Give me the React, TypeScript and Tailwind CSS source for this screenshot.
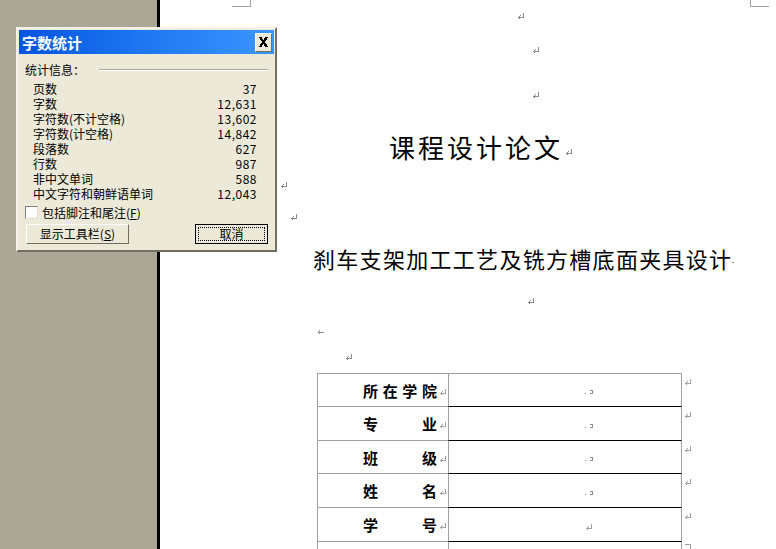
import React from "react";

const CJK = { fontFamily: '"Noto Sans CJK SC", "Noto Sans", sans-serif' };

function Ret({ c = "#8a8a8a" }: { c?: string }) {
  return (
    <svg width="8" height="8" viewBox="0 0 8 8" shapeRendering="crispEdges" className="block">
      <path d="M6.5 0.5 V5.5 H1.5" stroke={c} strokeWidth="1" fill="none" />
      <path d="M3.5 3.5 L1.5 5.5 L3.5 7.5" stroke={c} strokeWidth="1" fill="none" />
    </svg>
  );
}

function LeftArrow() {
  return (
    <svg width="8" height="6" viewBox="0 0 8 6" shapeRendering="crispEdges" className="block">
      <path d="M1 3 H7" stroke="#8a8a8a" strokeWidth="1" />
      <path d="M3 1 L1 3 L3 5" stroke="#8a8a8a" strokeWidth="1" fill="none" />
    </svg>
  );
}

function CellMark() {
  return (
    <svg width="9" height="6" viewBox="0 0 9 6" shapeRendering="crispEdges" className="block">
      <rect x="0" y="4" width="1" height="1" fill="#8a8a8a" />
      <path d="M4.5 1.5 H7.5 V4.5 H4.5" stroke="#8a8a8a" strokeWidth="1" fill="none" />
    </svg>
  );
}

const stats: [string, string][] = [
  ["页数", "37"],
  ["字数", "12,631"],
  ["字符数(不计空格)", "13,602"],
  ["字符数(计空格)", "14,842"],
  ["段落数", "627"],
  ["行数", "987"],
  ["非中文单词", "588"],
  ["中文字符和朝鲜语单词", "12,043"],
];

const rows: { chars: string[]; h: string; top: string; last?: boolean }[] = [
  { chars: ["所", "在", "学", "院"], h: "h-[33px]", top: "border-t-[#a0a0a0]" },
  { chars: ["专", "业"], h: "h-[34px]", top: "border-t-black" },
  { chars: ["班", "级"], h: "h-[33px]", top: "border-t-black" },
  { chars: ["姓", "名"], h: "h-[34px]", top: "border-t-black" },
  { chars: ["学", "号"], h: "h-[34px]", top: "border-t-black", last: true },
];

export default function App() {
  return (
    <div className="relative flex w-[776px] h-[549px] overflow-hidden bg-white" style={CJK}>
      {/* grey workspace */}
      <div className="w-[157px] h-full shrink-0 bg-[#aba797]" />
      <div className="w-[3px] h-full shrink-0 bg-black" />

      {/* document page */}
      <div className="flex-1 h-full flex flex-col bg-white overflow-hidden">
        {/* crop marks */}
        <div className="flex h-[7px] shrink-0">
          <div className="ml-[72px] w-[19px] h-[7px] border-r border-b border-[#a0a0a0]" />
          <div className="ml-[499px] w-[19px] h-[7px] border-l border-b border-[#a0a0a0]" />
        </div>
        <div className="shrink-0 mt-[4px] h-[10px] flex items-center pl-[357px]"><Ret /></div>
        <div className="shrink-0 mt-[24px] h-[10px] flex items-center pl-[372px]"><Ret /></div>
        <div className="shrink-0 mt-[35px] h-[10px] flex items-center pl-[372px]"><Ret /></div>

        {/* title */}
        <div className="shrink-0 mt-[32px] h-[30px] flex items-center pl-[229px]">
          <span className="text-[26px] leading-[30px] tracking-[3px] font-normal text-black">课程设计论文</span>
          <span className="mt-[10px] ml-[2px]"><Ret /></span>
        </div>

        <div className="shrink-0 mt-[18px] h-[10px] flex items-center pl-[120px]"><Ret /></div>
        <div className="shrink-0 mt-[22px] h-[10px] flex items-center pl-[130px]"><Ret /></div>

        {/* subtitle */}
        <div className="shrink-0 mt-[23px] h-[26px] flex items-center pl-[153px]">
          <span className="text-[22px] leading-[26px] tracking-[1.3px] text-black">刹车支架加工工艺及铣方槽底面夹具设计</span>
          <span className="mt-[8px] w-[2px] h-[1px] bg-[#8a8a8a]" />
        </div>

        <div className="shrink-0 mt-[25px] h-[10px] flex items-center pl-[367px]"><Ret /></div>
        <div className="shrink-0 mt-[21px] h-[10px] flex items-center pl-[157px]"><LeftArrow /></div>
        <div className="shrink-0 mt-[15px] h-[10px] flex items-center pl-[185px]"><Ret /></div>

        {/* table */}
        <div className="shrink-0 mt-[11px] pl-[157px] flex flex-col">
          {rows.map((r, i) => (
            <div key={i} className={`flex shrink-0 ${r.h}`}>
              <div className="w-[131px] h-full border-l border-t border-[#a0a0a0] flex items-center">
                <div className="ml-[45px] w-[74px] flex justify-between text-[15px] font-bold text-black leading-none">
                  {r.chars.map((c, k) => (
                    <span key={k}>{c}</span>
                  ))}
                </div>
                <span className="ml-[2px] mt-[3px]"><Ret c="#a0a0a0" /></span>
              </div>
              <div className={`w-[234px] h-full border-l border-r border-t border-l-[#a0a0a0] border-r-[#a0a0a0] ${r.top} flex items-center`}>
                <span className="ml-[136px] mt-[4px]">{r.last ? <Ret c="#a0a0a0" /> : <CellMark />}</span>
              </div>
              <div className="ml-[2px] mt-[5px]"><Ret c="#a0a0a0" /></div>
            </div>
          ))}
          <div className="flex shrink-0 h-[20px]">
            <div className="w-[131px] h-full border-l border-t border-l-[#a0a0a0] border-t-[#a0a0a0]" />
            <div className="w-[234px] h-full border-l border-r border-t border-l-[#a0a0a0] border-r-[#a0a0a0] border-t-black" />
            <div className="ml-[3px] mt-[3px] w-[6px] h-[6px] border-t border-r border-[#a0a0a0]" />
          </div>
        </div>
      </div>

      {/* floating dialog */}
      <div className="absolute left-[16px] top-[27px] w-[261px] h-[225px] bg-[#ece9d8] border-2 border-t-[#f4f2e8] border-l-[#f4f2e8] border-r-[#716f64] border-b-[#716f64] p-[1px] flex flex-col">
        <div className="h-[24px] shrink-0 flex items-center justify-between bg-gradient-to-r from-[#0554e0] to-[#3b97ff] pl-[3px] pr-[2px]">
          <span className="text-white text-[15px] font-bold leading-none">字数统计</span>
          <div className="w-[17px] h-[19px] bg-[#ece9d8] border border-t-white border-l-white border-r-[#716f64] border-b-[#716f64] flex items-center justify-center">
            <svg width="11" height="10" viewBox="0 0 11 10" shapeRendering="crispEdges">
              <path d="M0.5 0 H3.5 L5.5 3 L7.5 0 H10.5 L7 5 L10.5 10 H7.5 L5.5 7 L3.5 10 H0.5 L4 5 Z" fill="#000" />
            </svg>
          </div>
        </div>

        <div className="flex flex-col text-[12px] text-black leading-none">
          <div className="mt-[8px] h-[15px] flex items-center pl-[6px] pr-[6px]">
            <span>统计信息：</span>
            <div className="ml-[14px] flex-1 border-t border-t-[#aca899] border-b border-b-white" />
          </div>

          <div className="mt-[4px] flex flex-col pl-[14px] w-[238px]">
            {stats.map(([k, v]) => (
              <div key={k} className="h-[15px] flex items-center justify-between">
                <span>{k}</span>
                <span className="tracking-[0.5px]">{v}</span>
              </div>
            ))}
          </div>

          <div className="mt-[5px] h-[13px] flex items-center pl-[6px]">
            <div className="w-[13px] h-[13px] bg-white border border-t-[#808080] border-l-[#808080] border-r-[#e0ddd0] border-b-[#e0ddd0]" />
            <span className="ml-[4px]">包括脚注和尾注(<span className="underline">F</span>)</span>
          </div>

          <div className="mt-[5px] flex items-center pl-[7px] pr-[6px] justify-between">
            <div className="w-[103px] h-[20px] bg-[#ece9d8] border border-t-white border-l-white border-r-[#716f64] border-b-[#716f64] flex items-center justify-center">
              <span>显示工具栏(<span className="underline">S</span>)</span>
            </div>
            <div className="w-[73px] h-[20px] bg-[#ece9d8] border border-black p-[2px]">
              <div className="w-full h-full border border-dotted border-black flex items-center justify-center">
                <span>取消</span>
              </div>
            </div>
          </div>
        </div>
      </div>
    </div>
  );
}
